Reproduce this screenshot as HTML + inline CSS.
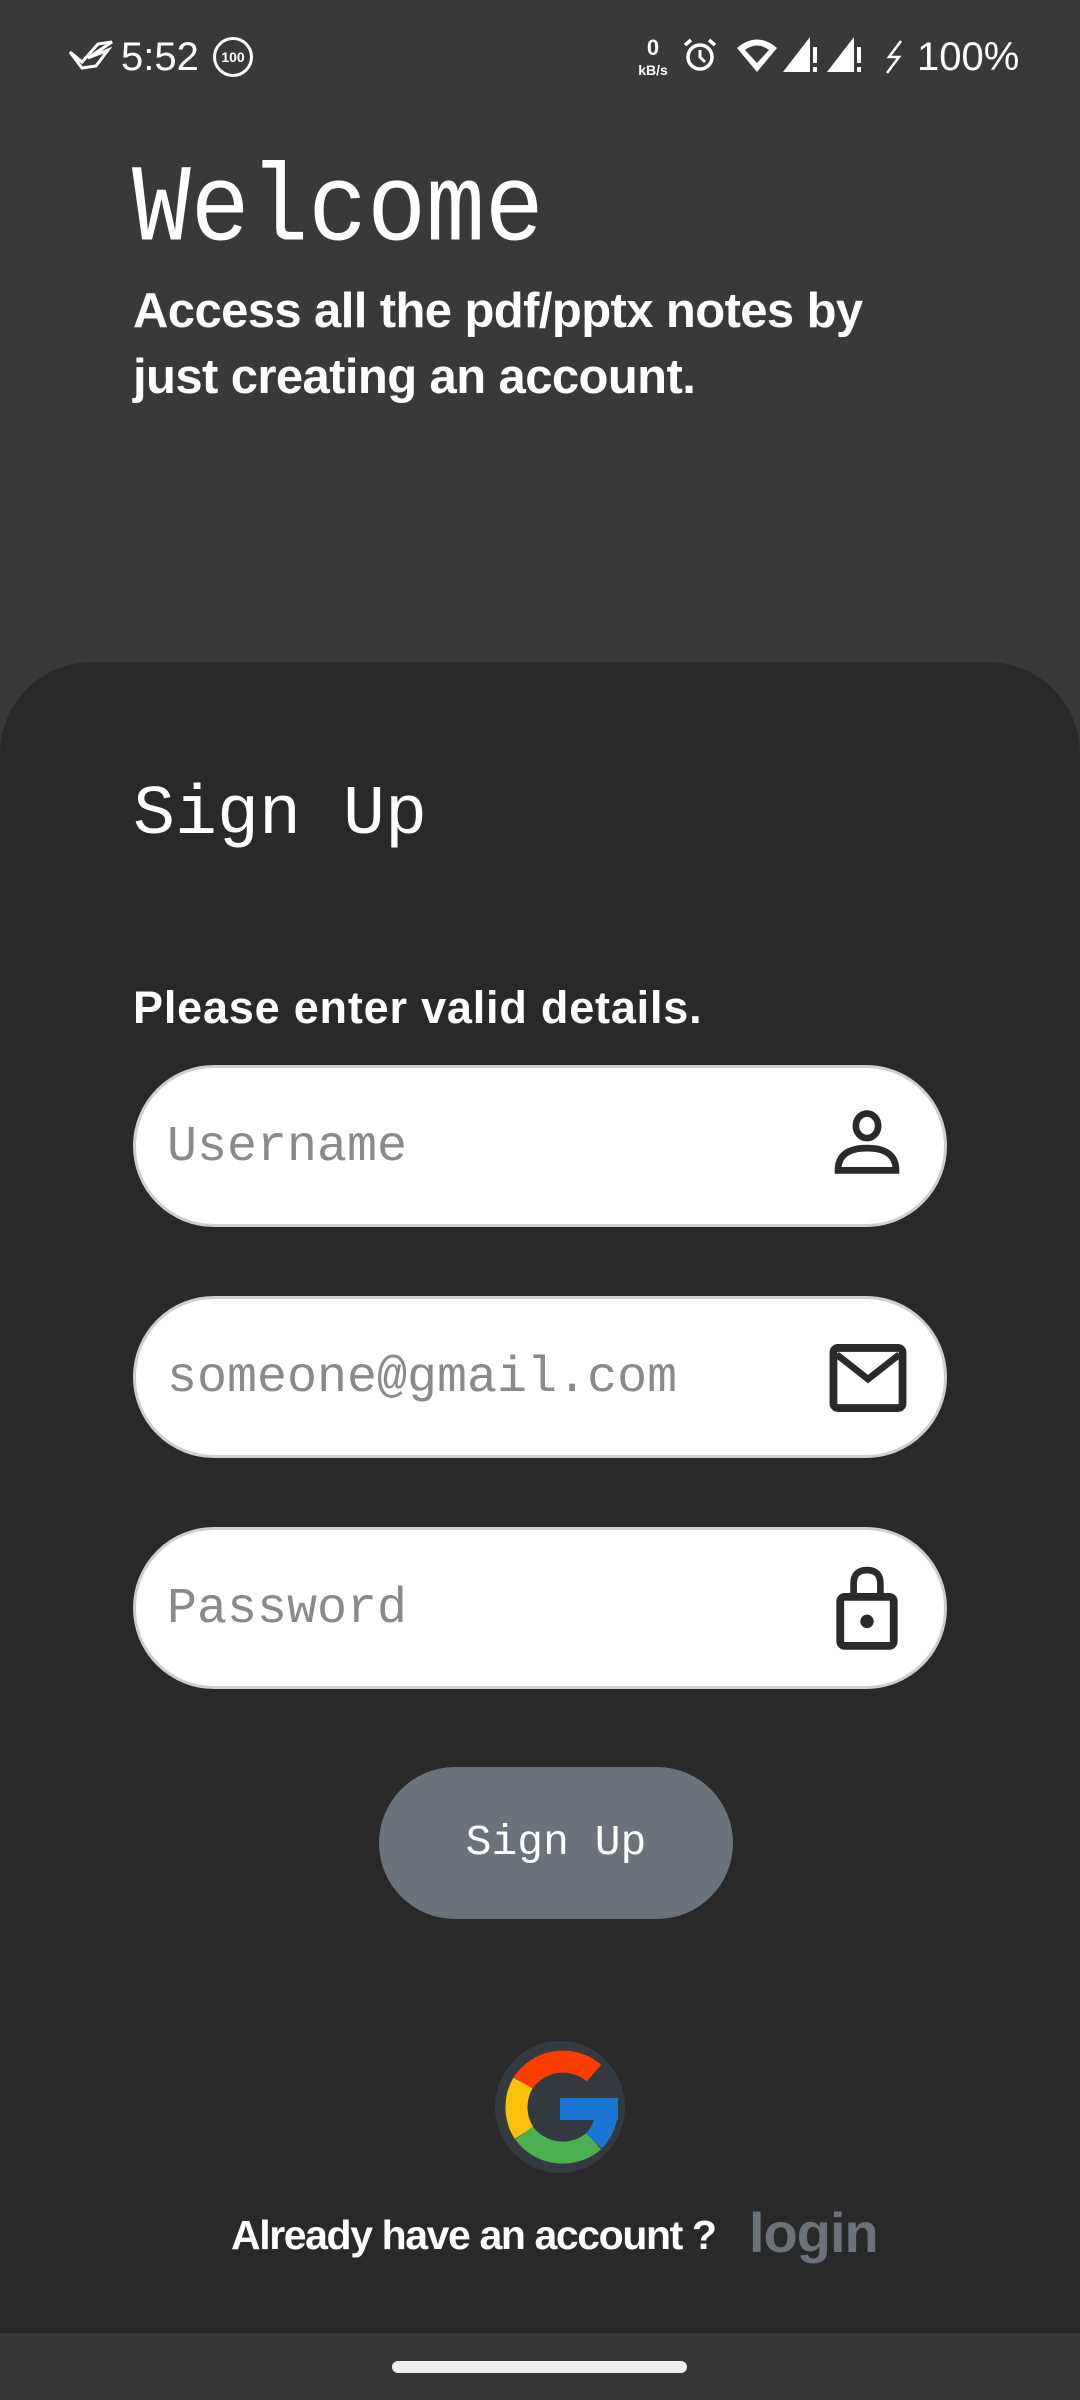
<!DOCTYPE html>
<html><head><meta charset="utf-8"><style>
*{margin:0;padding:0;box-sizing:border-box}
body{width:1080px;height:2400px;background:#393939;position:relative;overflow:hidden;font-family:"Liberation Sans",sans-serif;color:#fff}
.abs{position:absolute}
.mono{font-family:"Liberation Mono",monospace}
.card{left:0;top:662px;width:1080px;height:1672px;background:#292929;border-radius:92px 92px 0 0}
.nav{left:0;top:2333px;width:1080px;height:67px;background:#373737}
.inp{left:133px;width:814px;height:162px;background:#fff;border:3px solid #cfcfcf;border-radius:81px}
.ph{position:absolute;left:31px;top:0;line-height:160px;font-size:50px;color:#8a8a8a;font-family:"Liberation Mono",monospace}
.ic{position:absolute;right:38px;top:40px;width:78px;height:78px}
</style></head><body>
<svg class="abs" style="left:68px;top:40px" width="46" height="32" viewBox="0 0 46 32"><path d="M2 12 L14 22 L30 4 L44 2 L20 18 L40 10 L28 26 L14 28 Z" fill="none" stroke="#fff" stroke-width="3"/></svg>
<div class="abs" style="left:121px;top:33px;font-size:40px;line-height:48px">5:52</div>
<div class="abs" style="left:213px;top:37px;width:40px;height:40px;border:3px solid #fff;border-radius:50%;font-size:14px;font-weight:bold;text-align:center;line-height:34px">100</div>
<div class="abs" style="left:633px;top:38px;width:40px;text-align:center;font-weight:bold;font-size:22px;line-height:20px">0<br><span style="font-size:14px">kB/s</span></div>
<svg class="abs" style="left:682px;top:37px" width="36" height="36" viewBox="0 0 36 36"><circle cx="18" cy="20" r="12" fill="none" stroke="#fff" stroke-width="3.5"/><path d="M18 13 V20 L23 25" stroke="#fff" stroke-width="3" fill="none"/><path d="M3 8 L9 3 M33 8 L27 3" stroke="#fff" stroke-width="3.5"/></svg>
<svg class="abs" style="left:736px;top:37px" width="42" height="36" viewBox="0 0 42 36"><path d="M1 11 Q21 -6 41 11 L21 35 Z" fill="#fff"/><path d="M9 13 Q21 4 33 13 L21 26 Z" fill="#393939"/></svg>
<svg class="abs" style="left:783px;top:37px" width="36" height="36" viewBox="0 0 36 36"><path d="M0 35 L27 35 L27 0 Z" fill="#fff"/><rect x="30" y="10" width="4" height="16" fill="#fff"/><rect x="30" y="30" width="4" height="5" fill="#fff"/></svg>
<svg class="abs" style="left:827px;top:37px" width="36" height="36" viewBox="0 0 36 36"><path d="M0 35 L27 35 L27 0 Z" fill="#fff"/><rect x="30" y="10" width="4" height="16" fill="#fff"/><rect x="30" y="30" width="4" height="5" fill="#fff"/></svg>
<svg class="abs" style="left:883px;top:40px" width="24" height="34" viewBox="0 0 24 34"><path d="M18 1 L6 17 L16 17 L4 33" fill="none" stroke="#fff" stroke-width="2.5"/></svg>
<div class="abs" style="left:917px;top:33px;font-size:40px;line-height:48px">100%</div>
<div class="abs mono" style="left:132px;top:150px;font-size:98px;line-height:110px;transform:scaleY(1.12);transform-origin:top left">Welcome</div>
<div class="abs" style="left:133px;top:278px;font-size:49px;font-weight:bold;line-height:66px;letter-spacing:-0.6px;width:940px">Access all the pdf/pptx notes by<br>just creating an account.</div>
<div class="abs card"></div>
<div class="abs mono" style="left:133px;top:774px;font-size:70px;line-height:84px">Sign Up</div>
<div class="abs" style="left:133px;top:978px;font-size:45px;font-weight:bold;line-height:60px;letter-spacing:0.8px">Please enter valid details.</div>
<div class="abs inp" style="top:1065px"><div class="ph">Username</div>
<svg class="ic" viewBox="0 0 70 70"><ellipse cx="35" cy="16" rx="10" ry="11" fill="none" stroke="#2a2a2a" stroke-width="6"/><path d="M9 56 Q9 36 35 36 Q61 36 61 56 Z" fill="none" stroke="#2a2a2a" stroke-width="6"/></svg></div>
<div class="abs inp" style="top:1296px"><div class="ph">someone@gmail.com</div>
<svg class="ic" viewBox="0 0 70 70" style="right:34px;width:84px"><rect x="4" y="8" width="62" height="54" rx="4" fill="none" stroke="#2a2a2a" stroke-width="7"/><path d="M7 14 L35 36 L63 14" fill="none" stroke="#2a2a2a" stroke-width="6"/></svg></div>
<div class="abs inp" style="top:1527px"><div class="ph">Password</div>
<svg class="ic" viewBox="0 0 70 80" style="top:33px;height:90px"><path d="M23 32 V18 Q23 6 35 6 Q47 6 47 18 V32" fill="none" stroke="#2a2a2a" stroke-width="6"/><rect x="11" y="30" width="48" height="44" rx="4" fill="none" stroke="#2a2a2a" stroke-width="7"/><circle cx="35" cy="52" r="6" fill="#2a2a2a"/></svg></div>
<div class="abs mono" style="left:379px;top:1767px;width:354px;height:152px;background:#6b727a;border-radius:76px;text-align:center;line-height:152px;font-size:43px">Sign Up</div>
<svg class="abs" style="left:494px;top:2041px" width="132" height="132" viewBox="0 0 132 132">
<ellipse cx="66" cy="66" rx="65" ry="66" fill="#353a40"/>
<g fill="none" stroke-width="22">
<path d="M100 32 A48 48 0 0 0 29 42" stroke="#fc3d00"/>
<path d="M29 42 A48 48 0 0 0 30 92" stroke="#fbc10a"/>
<path d="M30 92 A48 48 0 0 0 100 100" stroke="#4caf50"/>
<path d="M100 100 A48 48 0 0 0 113 64" stroke="#1976d2"/>
</g>
<rect x="66" y="57" width="58" height="22" fill="#1976d2"/>
</svg>
<div class="abs" style="left:231px;top:2205px;font-size:41px;font-weight:bold;line-height:60px;letter-spacing:-1.4px">Already have an account ?</div>
<div class="abs" style="left:749px;top:2198px;font-size:56px;font-weight:bold;line-height:70px;color:#6b727a;letter-spacing:-1px">login</div>
<div class="abs nav"></div>
<div class="abs" style="left:392px;top:2361px;width:295px;height:12px;border-radius:6px;background:#efefef"></div>
</body></html>
